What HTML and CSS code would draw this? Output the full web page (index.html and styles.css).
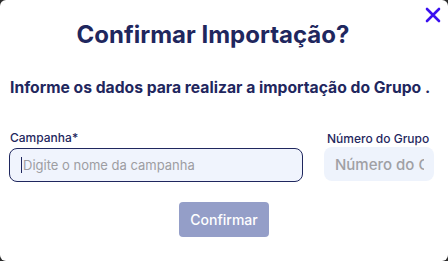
FILE: index.html
```html
<!DOCTYPE html>
<html lang="pt">
<head>
<meta charset="utf-8">
<link rel="stylesheet" href="styles.css">
</head>
<body>
<div class="modal">
  <button class="close" aria-label="Fechar">
    <svg width="16" height="16" viewBox="0 0 16 16"><path d="M2 2 L14 14 M14 2 L2 14" stroke="#3b10f0" stroke-width="2.6" stroke-linecap="round"/></svg>
  </button>
  <h1 class="title">Confirmar Importação?</h1>
  <p class="subtitle">Informe os dados para realizar a importação do Grupo .</p>
  <div class="fields">
    <div class="field campaign">
      <label class="label">Campanha*</label>
      <div class="input focused"><span class="caret"></span><span class="ph">Digite o nome da campanha</span></div>
    </div>
    <div class="field group">
      <label class="label">Número do Grupo</label>
      <div class="input plain"><span class="ph big">Número do Grupo</span></div>
    </div>
  </div>
  <div class="actions">
    <button class="confirm">Confirmar</button>
  </div>
</div>
</body>
</html>
```
FILE: styles.css
```css
html, body { margin: 0; padding: 0; }
body {
  width: 448px; height: 261px; background: #2b2b2b; overflow: hidden;
  font-family: Inter, "Noto Sans", sans-serif;
}
.modal {
  position: relative;
  width: 448px; height: 261px; box-sizing: border-box;
  background: #fff; border-radius: 6px;
  padding: 20px 9px 0 9px;
  color: #1f275e;
}
.close {
  position: absolute; top: 7px; right: 7px;
  background: none; border: 0; padding: 0; width: 16px; height: 16px;
}
.close svg { display: block; }
.title {
  margin: 0; padding-right: 22px; text-align: center; font-size: 24px; font-weight: 700;
  line-height: 30px; letter-spacing: 0;
}
.subtitle {
  margin: 28px 0 0 1px; font-size: 15.7px; font-weight: 700; line-height: 20px;
}
.fields {
  display: flex; align-items: flex-end; gap: 21px; margin-top: 32px;
}
.field { display: flex; flex-direction: column; }
.campaign { width: 294px; }
.group { width: 110px; margin-bottom: 1px; }
.label { font-size: 12px; font-weight: 500; line-height: 15px; margin: 0 0 3px 1px; }
.group .label { margin: 0 0 1px 3px; }
.input {
  height: 34px; box-sizing: border-box; border-radius: 8px;
  display: flex; align-items: center; overflow: hidden; white-space: nowrap;
}
.focused { border: 1px solid #1f275e; background: #f0f4fd; padding-left: 11px; }
.plain { background: #eef3fc; padding: 0 10px 0 11px; }
.plain .ph { overflow: hidden; }
.caret { width: 1px; height: 16px; background: #1f275e; margin-right: 1px; }
.ph { font-size: 13px; color: #9d9da2; }
.ph.big { font-size: 15px; font-weight: 500; color: #a0a0a4; }
.actions { display: flex; justify-content: center; margin-top: 20px; }
.confirm {
  width: 90px; height: 35px; border: 0; border-radius: 4px;
  background: #949ec8; color: #fff; font-family: inherit; font-size: 14px; font-weight: 500;
}
```
